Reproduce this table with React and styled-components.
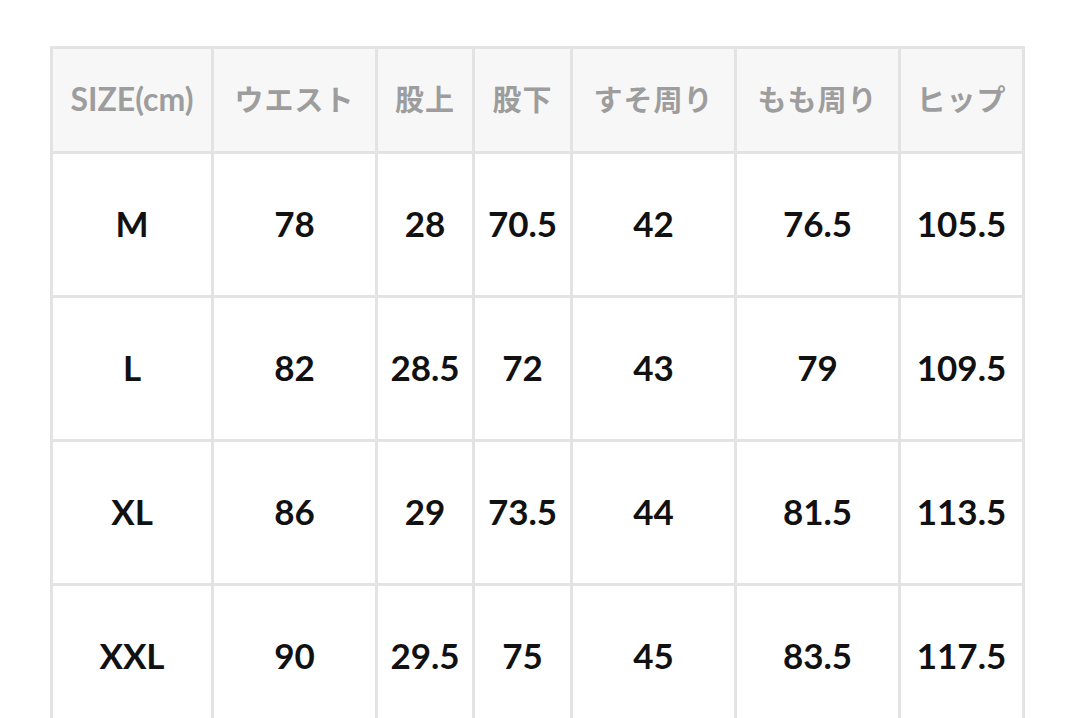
import React from "react";
import styled, { createGlobalStyle } from "styled-components";

const GlobalStyle = createGlobalStyle`
  html, body {
    margin: 0;
    padding: 0;
    background: #ffffff;
  }
  body {
    font-family: Lato, "Noto Sans CJK JP", sans-serif;
    overflow: hidden;
  }
`;

const columns = [
  { key: "size", label: "SIZE(cm)", width: 161 },
  { key: "waist", label: "ウエスト", width: 164 },
  { key: "rise", label: "股上", width: 97 },
  { key: "inseam", label: "股下", width: 98 },
  { key: "hem", label: "すそ周り", width: 164 },
  { key: "thigh", label: "もも周り", width: 164 },
  { key: "hip", label: "ヒップ", width: 124 },
];

const rows = [
  ["M", "78", "28", "70.5", "42", "76.5", "105.5"],
  ["L", "82", "28.5", "72", "43", "79", "109.5"],
  ["XL", "86", "29", "73.5", "44", "81.5", "113.5"],
  ["XXL", "90", "29.5", "75", "45", "83.5", "117.5"],
];

const Page = styled.div`
  padding: 46px 0 0 50px;
  height: 718px;
  box-sizing: border-box;
`;

const SizeTable = styled.table`
  border-collapse: collapse;
  table-layout: fixed;
  width: 973px;
  border: 3px solid #e3e3e3;
`;

const HeadCell = styled.th`
  height: 98px;
  padding: 0 0 4px;
  border: 3px solid #e3e3e3;
  background: #f7f7f7;
  color: #9d9d9d;
  font-family: Lato, "Noto Sans CJK JP", sans-serif;
  font-weight: 700;
  font-size: ${(p) => (p.$jp ? "29px" : "32px")};
  letter-spacing: ${(p) => (p.$jp ? "1px" : "0")};
  text-align: center;
  vertical-align: middle;
  white-space: nowrap;
`;

const Cell = styled.td`
  height: 138px;
  padding: 0 0 3px;
  border: 3px solid #e3e3e3;
  color: #111111;
  font-family: Lato, sans-serif;
  font-weight: 700;
  font-size: 35px;
  text-align: center;
  vertical-align: middle;
`;

export default function App() {
  return (
    <>
      <GlobalStyle />
      <Page>
        <SizeTable>
          <colgroup>
            {columns.map((c) => (
              <col key={c.key} style={{ width: c.width }} />
            ))}
          </colgroup>
          <thead>
            <tr>
              {columns.map((c, i) => (
                <HeadCell key={c.key} $jp={i > 0}>
                  {c.label}
                </HeadCell>
              ))}
            </tr>
          </thead>
          <tbody>
            {rows.map((r) => (
              <tr key={r[0]}>
                {r.map((v, i) => (
                  <Cell key={columns[i].key}>{v}</Cell>
                ))}
              </tr>
            ))}
          </tbody>
        </SizeTable>
      </Page>
    </>
  );
}
